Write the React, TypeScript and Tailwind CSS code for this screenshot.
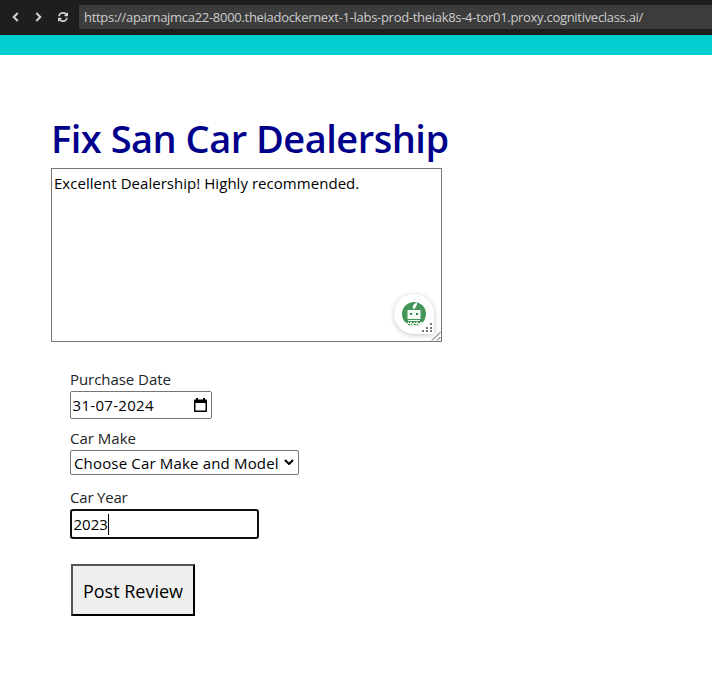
import type { ReactNode } from 'react';

function BrowserBar() {
  return (
    <header className="flex h-[35px] items-center bg-[#1e1e1e] text-[#cccccc]">
      <svg className="ml-3 -mt-px h-[10px] w-[7px]" viewBox="0 0 7 10" fill="none" stroke="#d4d4d4" strokeWidth="2">
        <path d="M5.700 1 1.700 5l4 4" />
      </svg>
      <svg className="ml-4 -mt-px h-[10px] w-[7px]" viewBox="0 0 7 10" fill="none" stroke="#d4d4d4" strokeWidth="2">
        <path d="m1.300 1 4 4-4 4" />
      </svg>
      <svg className="ml-4 -mt-px h-[10px] w-[10px]" viewBox="0 0 1536 1536" fill="#d4d4d4">
        <path d="M1511 928q0 5-1 7-64 268-268 434.500T764 1536q-146 0-282.500-55T238 1324l-129 129q-19 19-45 19t-45-19-19-45V960q0-26 19-45t45-19h448q26 0 45 19t19 45-19 45l-137 137q71 66 161 102t187 36q134 0 250-65t186-179q11-17 53-117 8-23 30-23h192q13 0 22.500 9.500t9.500 22.500zm25-800v448q0 26-19 45t-45 19h-448q-26 0-45-19t-19-45 19-45l138-138Q969 256 768 256q-134 0-250 65T332 500q-11 17-53 117-8 23-30 23H50q-13 0-22.500-9.500T18 608v-7q65-268 270-434.500T768 0q146 0 284 55.500T1297 212l130-129q19-19 45-19t45 19 19 45z" />
      </svg>
      <div className="ml-[11px] -mt-px flex h-6 flex-1 items-start bg-[#3c3c3c] pl-[5px]">
        <span className="text-[13px] leading-6 tracking-[-0.295px] whitespace-nowrap">
          https://aparnajmca22-8000.theiadockernext-1-labs-prod-theiak8s-4-tor01.proxy.cognitiveclass.ai/
        </span>
      </div>
    </header>
  );
}

function AssistantBadge() {
  return (
    <div className="absolute top-[125px] left-[342px] h-[40px] w-[40px] rounded-full rounded-br-[5px] bg-white shadow-[0_1px_5px_rgba(60,60,80,0.3)]">
      <svg className="h-[40px] w-[40px]" viewBox="0 0 40 40">
        <circle cx="20" cy="20" r="12" fill="#459558" />
        <path d="M19 15c-.8-3 .7-5.500 4-6.500.2 3-1 5-3 6.500z" fill="#fff" />
        <rect x="13.500" y="16" width="13" height="9" fill="#f4faf5" />
        <path d="M16 19h2v2h-2zM22 19h2v2h-2z" fill="#35824a" />
        <path d="M14 26.500h12" stroke="#f4faf5" strokeWidth="1" />
        <path d="M10.500 28h19c-2 3-5.500 4-9.500 4s-7.500-1-9.500-4z" fill="#dceee0" />
        <path d="M12 28.500h15M14 30.500h12" stroke="#459558" strokeWidth="1" strokeDasharray="2 1 1 2" />
        <path d="M36 29h2v2h-2zM32 33h2v2h-2zM36 33h2v2h-2zM28 36h2v2h-2zM32 36h2v2h-2zM36 36h2v2h-2z" fill="#777" />
      </svg>
    </div>
  );
}

function Label({ children }: { children: ReactNode }) {
  return <div className="h-6 text-[15px] leading-6 text-[#212529]">{children}</div>;
}

export default function App() {
  return (
    <div className="h-[694px] overflow-hidden bg-white font-['Open_Sans','Noto_Sans',sans-serif] text-black">
      <BrowserBar />
      <div className="h-5 bg-[#00ced1]" />
      <main className="pt-[59px] pl-[51px]">
        <h1 className="h-[54px] text-[38px] leading-[49px] font-semibold tracking-[-0.5px] whitespace-nowrap text-[#00008b]">
          <span>Fix San Car Dealership</span>
        </h1>
        <div className="relative h-[174px] w-[391px] border border-[#767676] px-0.5 py-[2px]">
          <p className="text-[15px] leading-6 tracking-[0.04px] whitespace-nowrap">
            <span>Excellent Dealership! Highly recommended.</span>
          </p>
          <AssistantBadge />
          <svg className="absolute right-0 bottom-0 h-[10px] w-[10px]" viewBox="0 0 10 10" stroke="#555" fill="none">
            <path d="M1 9.500 9.500 1M6 9.500 9.500 6" />
          </svg>
        </div>
        <form className="pt-[25px] pl-[19px]">
          <Label><span className="tracking-[-0.05px]">Purchase Date</span></Label>
          <div className="flex h-7 w-[142px] items-center justify-between rounded-[2px] border border-[#767676] pr-[4px] pl-[1.5px] text-[15px]">
            <span className="tracking-[0.3px]">31-07-2024</span>
            <svg className="h-[14px] w-[13px]" viewBox="0 0 13 14">
              <path fillRule="evenodd" d="M2 0h2v1.500h5V0h2v1.500h1c.5 0 1 .5 1 1V13c0 .5-.5 1-1 1H1c-.5 0-1-.5-1-1V2.500c0-.5.5-1 1-1h1zM1.500 5v7.500h10V5z" />
            </svg>
          </div>
          <div className="mt-[7px]"><Label><span>Car Make</span></Label></div>
          <div className="flex h-[25px] w-[229px] items-center justify-between rounded-[2px] border border-[#767676] pr-1 pl-[3px] text-[15px]">
            <span className="pt-px tracking-[0.17px] whitespace-nowrap">Choose Car Make and Model</span>
            <svg className="mb-px h-[6px] w-[10px] shrink-0" viewBox="0 0 10 6" fill="none" stroke="#000" strokeWidth="2">
              <path d="m1 1 4 4 4-4" />
            </svg>
          </div>
          <div className="mt-[10px]"><Label><span className="tracking-[-0.2px]">Car Year</span></Label></div>
          <div className="flex h-[30px] w-[189px] items-center rounded-[3px] border-2 border-[#101010] pl-[1.5px] text-[15px]">
            <span>2023</span>
            <i className="h-[21px] w-px bg-black" />
          </div>
          <div className="mt-[25px] ml-px flex h-[52px] w-[124px] items-center justify-center border-2 border-t-[#555] border-r-black border-b-black border-l-[#555] bg-[#efefef] pt-0.5 text-[18px]">
            <span className="whitespace-nowrap">Post Review</span>
          </div>
        </form>
      </main>
    </div>
  );
}
